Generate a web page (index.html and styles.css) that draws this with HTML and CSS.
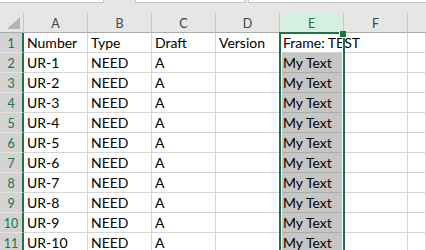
FILE: index.html
```html
<!DOCTYPE html>
<html>
<head>
<meta charset="utf-8">
<link rel="stylesheet" href="styles.css">
</head>
<body>
<div class="app">
  <div class="topbar">
    <div class="box b1"></div>
    <div class="box b2"></div>
    <div class="box b3"></div>
  </div>
  <div class="sheet">
    <div class="grid">
      <div class="h corner"><span class="tri"></span></div>
      <div class="h col">A</div>
      <div class="h col">B</div>
      <div class="h col">C</div>
      <div class="h col">D</div>
      <div class="h col sel-col">E</div>
      <div class="h col">F</div>
      <div class="h col last"></div>

      <div class="rh">1</div><div class="c">Number</div><div class="c">Type</div><div class="c">Draft</div><div class="c">Version</div><div class="c active">Frame: TEST</div><div class="c"></div><div class="c"></div>
      <div class="rh">2</div><div class="c">UR-1</div><div class="c">NEED</div><div class="c">A</div><div class="c"></div><div class="c s">My Text</div><div class="c"></div><div class="c"></div>
      <div class="rh">3</div><div class="c">UR-2</div><div class="c">NEED</div><div class="c">A</div><div class="c"></div><div class="c s">My Text</div><div class="c"></div><div class="c"></div>
      <div class="rh">4</div><div class="c">UR-3</div><div class="c">NEED</div><div class="c">A</div><div class="c"></div><div class="c s">My Text</div><div class="c"></div><div class="c"></div>
      <div class="rh">5</div><div class="c">UR-4</div><div class="c">NEED</div><div class="c">A</div><div class="c"></div><div class="c s">My Text</div><div class="c"></div><div class="c"></div>
      <div class="rh">6</div><div class="c">UR-5</div><div class="c">NEED</div><div class="c">A</div><div class="c"></div><div class="c s">My Text</div><div class="c"></div><div class="c"></div>
      <div class="rh">7</div><div class="c">UR-6</div><div class="c">NEED</div><div class="c">A</div><div class="c"></div><div class="c s">My Text</div><div class="c"></div><div class="c"></div>
      <div class="rh">8</div><div class="c">UR-7</div><div class="c">NEED</div><div class="c">A</div><div class="c"></div><div class="c s">My Text</div><div class="c"></div><div class="c"></div>
      <div class="rh">9</div><div class="c">UR-8</div><div class="c">NEED</div><div class="c">A</div><div class="c"></div><div class="c s">My Text</div><div class="c"></div><div class="c"></div>
      <div class="rh">10</div><div class="c">UR-9</div><div class="c">NEED</div><div class="c">A</div><div class="c"></div><div class="c s">My Text</div><div class="c"></div><div class="c"></div>
      <div class="rh">11</div><div class="c">UR-10</div><div class="c">NEED</div><div class="c">A</div><div class="c"></div><div class="c s">My Text</div><div class="c"></div><div class="c"></div>
    </div>
    <div class="selection"><span class="handle"></span></div>
  </div>
</div>
</body>
</html>
```

FILE: styles.css
```css
html, body {
  margin: 0;
  padding: 0;
  background: #ffffff;
  overflow: hidden;
}
.app {
  width: 426px;
  height: 250px;
  overflow: hidden;
  font-family: Lato, "Open Sans", sans-serif;
}
.topbar {
  height: 13px;
  background: #e6e6e6;
  display: flex;
  align-items: flex-start;
}
.box {
  height: 3px;
  box-sizing: border-box;
  background: #ffffff;
  border: 1px solid #c6c6c6;
  border-top: none;
}
.b1 { width: 105px; margin-left: -1px; }
.b2 { width: 110px; margin-left: 31px; }
.b3 { flex: 1; margin-left: 3px; margin-right: -2px; }

.sheet {
  position: relative;
}
.grid {
  display: grid;
  grid-template-columns: 24px repeat(6, 64px) 1fr;
  grid-auto-rows: 20px;
}
.h {
  background: #e6e6e6;
  border-right: 1px solid #c8c8c8;
  border-bottom: 1px solid #ababab;
  box-sizing: border-box;
  font-size: 12.5px;
  color: #444444;
  display: flex;
  align-items: center;
  justify-content: center;
  padding-top: 1px;
}
.h.last { border-right: none; }
.corner {
  position: relative;
}
.tri {
  position: absolute;
  right: 3px;
  bottom: 3px;
  width: 0;
  height: 0;
  border-left: 13px solid transparent;
  border-bottom: 12px solid #b5b5b5;
}
.sel-col {
  background: #d3f0e0;
  color: #217346;
  border-bottom: 1px solid #217346;
}
.rh {
  background: #d2d2d2;
  border-right: 2px solid #217346;
  border-bottom: 1px solid #e1e1e1;
  box-sizing: border-box;
  font-size: 12.5px;
  color: #217346;
  display: flex;
  align-items: center;
  justify-content: center;
  padding-top: 1px;
}
.c {
  border-right: 1px solid #d4d4d4;
  border-bottom: 1px solid #d4d4d4;
  box-sizing: border-box;
  font-size: 14px;
  color: #000000;
  white-space: nowrap;
  padding: 0 2px 0 3px;
  display: flex;
  align-items: flex-end;
  line-height: 18px;
  min-width: 0;
}
.c.active {
  border-right-color: transparent;
}
.c.s {
  background: #c6c6c6;
  border-bottom-color: #ababab;
}
.selection {
  position: absolute;
  left: 279px;
  top: 19px;
  width: 66px;
  height: 230px;
  box-sizing: border-box;
  border: 2px solid #217346;
  border-bottom: none;
  box-shadow: inset 1px 0 0 #ffffff, inset -1px 0 0 #ffffff;
}
.handle {
  position: absolute;
  right: -3px;
  top: -3px;
  width: 6px;
  height: 6px;
  background: #217346;
  border-left: 1px solid #ffffff;
  border-bottom: 1px solid #ffffff;
}
```
